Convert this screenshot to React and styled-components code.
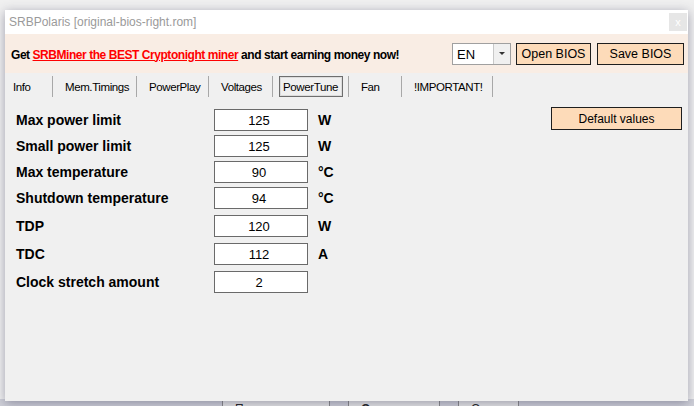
import React from 'react';
import styled, { createGlobalStyle } from 'styled-components';

const GlobalStyle = createGlobalStyle`
  html, body { margin: 0; padding: 0; }
  body {
    width: 694px;
    height: 406px;
    overflow: hidden;
    background: #f0f0f0;
    font-family: "Liberation Sans", Arial, sans-serif;
  }
`;

const rows = [
    { label: 'Max power limit', value: '125', unit: 'W' },
    { label: 'Small power limit', value: '125', unit: 'W' },
    { label: 'Max temperature', value: '90', unit: '°C' },
    { label: 'Shutdown temperature', value: '94', unit: '°C' },
    { label: 'TDP', value: '120', unit: 'W', gap: 6 },
    { label: 'TDC', value: '112', unit: 'A', gap: 6 },
    { label: 'Clock stretch amount', value: '2', unit: '', gap: 6 },
];

const tabs = [
    { name: 'Info', w: 44, pad: 4 },
    { name: 'Mem.Timings', w: 84 },
    { name: 'PowerPlay', w: 72 },
    { name: 'Voltages', w: 64 },
    { name: 'PowerTune', w: 76, active: true },
    { name: 'Fan', w: 53 },
    { name: '!IMPORTANT!', w: 91 },
];

// the app sitting behind the dialog
const Desktop = styled.div`
    position: relative;
    width: 694px;
    height: 406px;
    background: #f0f0f0;
`;

const BackSide = styled.div`
    height: 100%;
    display: flex;
    flex-direction: column;
    justify-content: flex-end;
`;

const BackButtons = styled.div`
    display: flex;
    gap: 18px;
    padding-left: 222px;
    height: 7px;
    overflow: hidden;
    background: #cfd0d8;
`;

const BackButton = styled.div`
    width: ${(p) => p.w}px;
    height: 22px;
    border: 1px solid #888;
    background: #e6e6e6;
    font-size: 12px;
    font-weight: ${(p) => (p.bold ? 700 : 400)};
    padding: 2px 0 0 12px;
    box-sizing: border-box;
    color: #222;
`;

const Window = styled.div`
    position: absolute;
    left: 5px;
    top: 10px;
    width: 683px;
    height: 391px;
    background: #f0f0f0;
    box-shadow: 0 2px 10px rgba(60, 60, 90, 0.45);
    display: flex;
    flex-direction: column;
`;

const TitleBar = styled.div`
    height: 24px;
    background: #fff;
    display: flex;
    align-items: center;
    justify-content: space-between;
    padding: 0 1px 0 4px;
`;

const Title = styled.span`
    font-size: 12px;
    color: #9a9a9a;
`;

const CloseBox = styled.div`
    width: 18px;
    height: 18px;
    background: #e6e6e6;
    color: #fff;
    font-size: 11px;
    display: flex;
    align-items: center;
    justify-content: center;
`;

const Banner = styled.div`
    height: 39px;
    background: #f9ede4;
    display: flex;
    align-items: center;
    padding: 0 4px 0 6px;
`;

const Promo = styled.div`
    flex: 1;
    font-size: 12px;
    font-weight: 700;
    color: #000;
    letter-spacing: -0.45px;
    padding-top: 2px;

    a {
        color: #ff0000;
        text-decoration: underline;
    }
`;

const Select = styled.div`
    width: 57px;
    height: 20px;
    border: 1px solid #a0a0a0;
    background: #fff;
    display: flex;
    margin-right: 5px;
`;

const SelectValue = styled.div`
    flex: 1;
    font-size: 13px;
    padding: 3px 0 0 4px;
`;

const SelectArrow = styled.div`
    width: 16px;
    background: #f0f0f0;
    border-left: 1px solid #c8c8c8;
    display: flex;
    align-items: center;
    justify-content: center;

    &::after {
        content: '';
        border-left: 3px solid transparent;
        border-right: 3px solid transparent;
        border-top: 3px solid #333;
    }
`;

const PeachButton = styled.button`
    width: ${(p) => p.w}px;
    height: ${(p) => p.h || 22}px;
    margin-left: ${(p) => p.ml || 0}px;
    margin-top: ${(p) => p.mt || 0}px;
    background: #fddbb9;
    border: 1px solid #1e1e1e;
    font-family: "Liberation Sans", Arial, sans-serif;
    font-size: ${(p) => p.fs || 12.5}px;
    color: #000;
    padding: 0;
`;

const TabRow = styled.div`
    height: 24px;
    display: flex;
    align-items: flex-end;
    padding-left: 4px;
`;

const Tab = styled.div`
    width: ${(p) => p.w}px;
    height: 21px;
    display: flex;
    align-items: center;
    justify-content: ${(p) => (p.active ? 'center' : 'flex-start')};
    padding-left: ${(p) => (p.active ? 0 : p.pad)}px;
    border-right: 1px solid #a8a8a8;
    font-size: 11.5px;
    letter-spacing: -0.4px;
    color: #000;
    box-sizing: border-box;
`;

const ActiveBox = styled.div`
    height: 21px;
    width: 64px;
    display: flex;
    align-items: center;
    justify-content: center;
    box-sizing: border-box;
    border: 1px solid #6e6e6e;
    box-shadow: inset 0 0 0 1px #dcdcdc;
`;

const Body = styled.div`
    flex: 1;
    display: flex;
    align-items: flex-start;
    padding: 12px 6px 0 11px;
`;

const Fields = styled.div`
    flex: 1;
    display: flex;
    flex-direction: column;
`;

const Row = styled.div`
    display: flex;
    align-items: center;
    height: 22px;
    margin-top: ${(p) => p.gap}px;
`;

const Label = styled.div`
    width: 198px;
    font-size: 14px;
    font-weight: 700;
    color: #000;
`;

const Field = styled.div`
    width: 88px;
    height: 20px;
    border: 1px solid #6a6a6a;
    background: #fff;
    font-size: 13px;
    display: flex;
    align-items: center;
    justify-content: center;
    padding-right: 4px;
`;

const Unit = styled.div`
    margin-left: 10px;
    font-size: 14px;
    font-weight: 700;
`;

export default function App() {
    return (
        <>
            <GlobalStyle />
            <Desktop>
                <BackSide>
                    <BackButtons>
                        <BackButton w={108}>Предпросмотр</BackButton>
                        <BackButton w={92} bold>Отправить</BackButton>
                        <BackButton w={61}>Отмена</BackButton>
                    </BackButtons>
                </BackSide>
                <Window>
                    <TitleBar>
                        <Title>SRBPolaris [original-bios-right.rom]</Title>
                        <CloseBox>x</CloseBox>
                    </TitleBar>
                    <Banner>
                        <Promo>
                            Get <a>SRBMiner the BEST Cryptonight miner</a> and start earning money now!
                        </Promo>
                        <Select>
                            <SelectValue>EN</SelectValue>
                            <SelectArrow />
                        </Select>
                        <PeachButton w={75}>Open BIOS</PeachButton>
                        <PeachButton w={87} ml={6}>Save BIOS</PeachButton>
                    </Banner>
                    <TabRow>
                        {tabs.map((t) => (
                            <Tab key={t.name} w={t.w} pad={t.pad || 12} active={t.active}>
                                {t.active ? <ActiveBox>{t.name}</ActiveBox> : t.name}
                            </Tab>
                        ))}
                    </TabRow>
                    <Body>
                        <Fields>
                            {rows.map((r, i) => (
                                <Row key={r.label} gap={i === 0 ? 0 : r.gap || 4}>
                                    <Label>{r.label}</Label>
                                    <Field>{r.value}</Field>
                                    <Unit>{r.unit}</Unit>
                                </Row>
                            ))}
                        </Fields>
                        <PeachButton w={131} h={23} fs={12} mt={-2}>Default values</PeachButton>
                    </Body>
                </Window>
            </Desktop>
        </>
    );
}
